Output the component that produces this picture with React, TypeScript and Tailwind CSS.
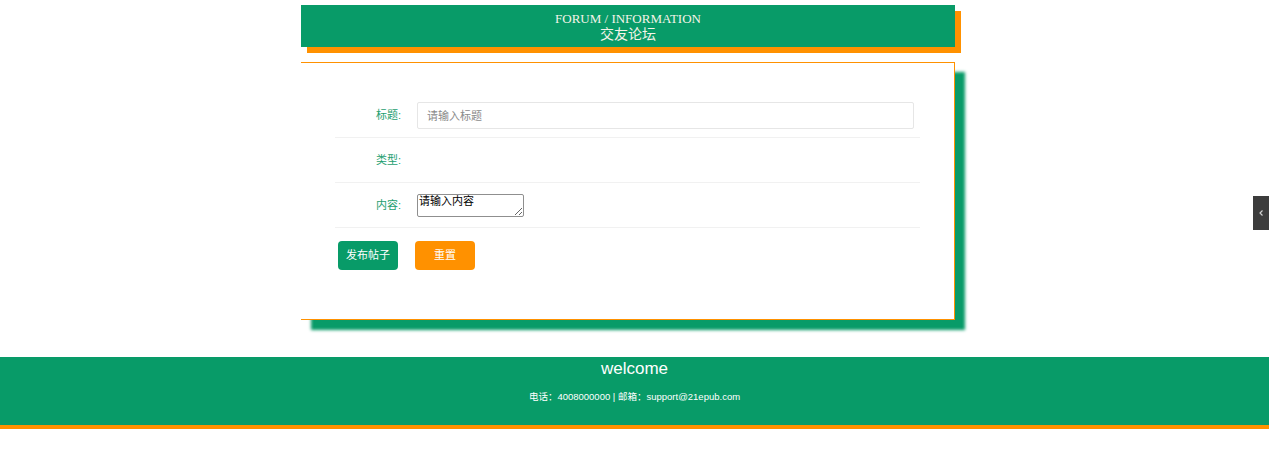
import { useState } from "react";

function FormRow({ label, children }: { label: string; children?: React.ReactNode }) {
  return (
    <div className="flex items-center h-[45px] border-b border-[#f1f1f1]">
      <label className="w-[66px] text-right text-[11px] text-[#1e9e6f]">{label}</label>
      <div className="ml-[16px] flex-1 flex items-center pt-[1px]">{children}</div>
    </div>
  );
}

export default function App() {
  const [title, setTitle] = useState("");
  const [content, setContent] = useState("请输入内容");

  return (
    <div
      className="relative w-full min-h-[473px] bg-white"
      style={{ fontFamily: '"Microsoft YaHei", "Liberation Sans", "Noto Sans CJK SC", sans-serif' }}
    >
      <div className="w-[667px] mx-auto pt-[5px]">
        <div className="w-[654px] h-[42px] bg-[#089b68] shadow-[6px_6px_0_#ff9100] flex flex-col items-center justify-center pt-[2px] text-[#f4f4e8]">
          <div className="text-[13px] leading-[14px]" style={{ fontFamily: '"Liberation Serif", serif' }}>
            FORUM / INFORMATION
          </div>
          <div className="text-[14px] leading-[17px]" style={{ fontFamily: '"Liberation Serif", "Noto Sans CJK SC", serif' }}>
            交友论坛
          </div>
        </div>

        <div className="mt-[15px] w-[654px] border-t border-r border-b border-[#ff9100] bg-white shadow-[10px_10px_3px_#089b68] pt-[30px] pb-[49px] pl-[34px] pr-[34px]">
          <FormRow label="标题:">
            <input
              value={title}
              onChange={(e) => setTitle(e.target.value)}
              placeholder="请输入标题"
              className="w-[497px] h-[27px] border border-[#e6e6e6] rounded-[2px] pl-[9px] text-[11px] text-[#333] placeholder:text-[#8a8a8a] outline-none"
            />
          </FormRow>
          <FormRow label="类型:" />
          <FormRow label="内容:">
            <textarea
              value={content}
              onChange={(e) => setContent(e.target.value)}
              className="w-[107px] h-[23px] border border-[#8f8f8f] rounded-[2px] text-[11px] leading-[13px] px-[1px] text-black resize-y"
            />
          </FormRow>
          <div className="flex gap-[17px] mt-[13px] ml-[3px]">
            <button className="w-[60px] h-[29px] rounded-[4px] bg-[#089b68] text-white text-[11px]">发布帖子</button>
            <button className="w-[60px] h-[29px] rounded-[4px] bg-[#ff9100] text-white text-[11px]">重置</button>
          </div>
        </div>
      </div>

      <div className="mt-[37px] h-[72px] bg-[#089b68] border-b-[4px] border-[#ff9100] flex flex-col items-center text-white">
        <div className="text-[17px] leading-[20px] mt-[2px]" style={{ fontFamily: '"Liberation Sans", sans-serif' }}>
          welcome
        </div>
        <div className="text-[9.5px] mt-[11px]" style={{ fontFamily: '"Liberation Sans", "Noto Sans CJK SC", sans-serif' }}>
          电话：4008000000 | 邮箱：support@21epub.com
        </div>
      </div>

      <div className="absolute right-0 top-[196px] w-[16px] h-[34px] bg-[#3c3c3c] flex items-center justify-center">
        <svg width="8" height="8" viewBox="0 0 8 8" fill="none" stroke="#cfcfcf" strokeWidth="1.2">
          <path d="M5.5 1.5 L3 4 L5.5 6.5" />
        </svg>
      </div>
    </div>
  );
}
